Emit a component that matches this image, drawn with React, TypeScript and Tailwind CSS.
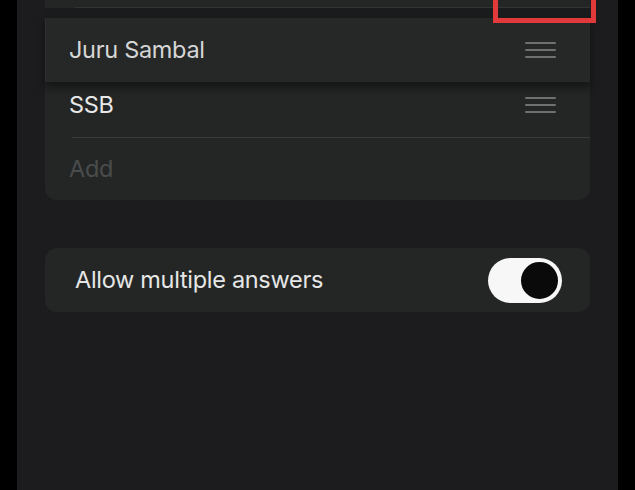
import React from 'react'

const Grip = () => {
    return (
        <div className="flex flex-col gap-[5px] w-[31px]">
            <div className="h-[2px] bg-[#6f7171] rounded-full"></div>
            <div className="h-[2px] bg-[#6f7171] rounded-full"></div>
            <div className="h-[2px] bg-[#6f7171] rounded-full"></div>
        </div>
    )
}

const App = () => {
    return (
        <div
            className="w-[635px] h-[490px] bg-black overflow-hidden"
            style={{ fontFamily: 'Inter, "Liberation Sans", sans-serif' }}
        >
            <div className="relative ml-[17px] w-[601px] h-[490px] bg-[#1c1c1e] px-[28px]">
                {/* options list */}
                <div className="flex flex-col bg-[#242626] rounded-b-[12px]">
                    {/* bottom of the row above, cut off */}
                    <div className="h-[7px]"></div>
                    <div className="ml-[30px] h-px bg-[#333535]"></div>
                    {/* empty slot left by the dragged row */}
                    <div className="h-[64px] bg-[#1a1b1c]"></div>
                    <div className="h-px bg-[#222424]"></div>
                    <div className="h-[64px] flex items-center justify-between pl-[24px] pr-[34px]">
                        <span className="text-[23.5px] text-[#e8e8e8] tracking-[-0.3px]">SSB</span>
                        <Grip />
                    </div>
                    <div className="ml-[27px] h-px bg-[#3a3c3c]"></div>
                    <div className="h-[62px] flex items-center pl-[24px]">
                        <span className="text-[23.5px] text-[#4a4c4c] tracking-[-0.3px]">Add</span>
                    </div>
                </div>

                {/* row being dragged */}
                <div className="absolute z-10 left-[28px] top-[18px] w-[545px] h-[64px] bg-[#262828] border-l border-[#2e3030] shadow-[0_6px_8px_rgba(0,0,0,0.45)]">
                    <div className="h-[64px] flex items-center justify-between pl-[23px] pr-[34px]">
                        <span className="text-[23.5px] text-[#d6d6d6] tracking-[-0.3px]">Juru Sambal</span>
                        <Grip />
                    </div>
                </div>

                {/* toggle card */}
                <div className="mt-[48px] h-[64px] bg-[#242626] rounded-[12px] flex items-center justify-between pl-[30px] pr-[28px]">
                    <span className="text-[23.5px] text-[#e6e6e6] tracking-[-0.3px]">Allow multiple answers</span>
                    <div className="w-[74px] h-[45px] rounded-full bg-[#f7f7f7] flex items-center justify-end pr-[1px]">
                        <div className="w-[43px] h-[43px] rounded-full bg-[#0a0a0a] border-[3px] border-[#f7f7f7]"></div>
                    </div>
                </div>

                {/* red highlight annotation */}
                <div className="absolute z-20 left-[476px] top-[-10px] w-[103px] h-[33px] border-[5px] border-[#e23a3a]"></div>
            </div>
        </div>
    )
}

export default App
